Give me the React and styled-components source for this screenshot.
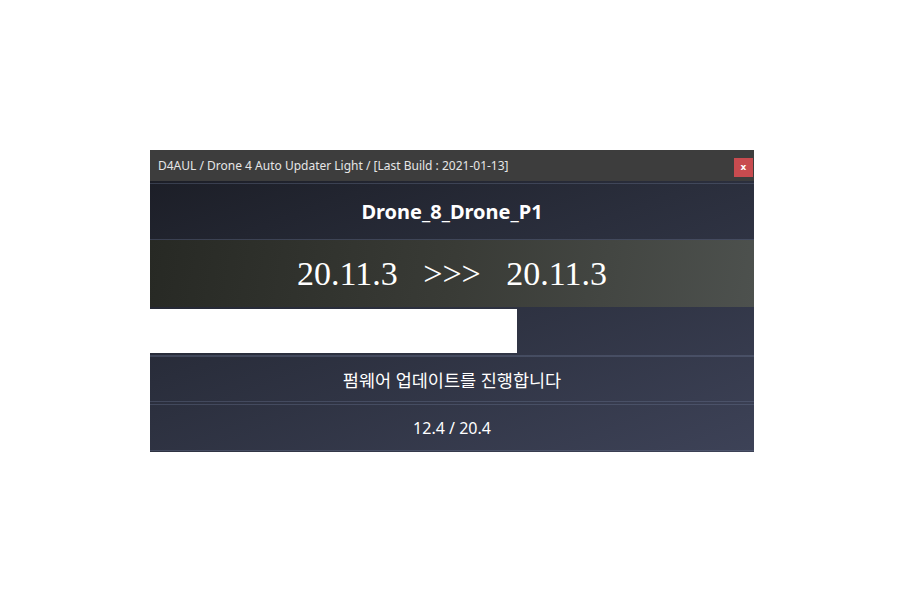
import React from "react"
import styled, { createGlobalStyle } from "styled-components"

const GlobalStyle = createGlobalStyle`
  html, body {
    margin: 0;
    padding: 0;
    background: #ffffff;
  }
  body {
    font-family: "Noto Sans", "Noto Sans CJK KR", sans-serif;
  }
`

const Page = styled.div`
  width: 904px;
  height: 602px;
  display: flex;
  align-items: center;
  justify-content: center;
`

const Window = styled.div`
  width: 604px;
  height: 302px;
  display: flex;
  flex-direction: column;
  background: linear-gradient(160deg, #1a1c24 0%, #2a2e3c 45%, #3d4257 100%);
  color: #ffffff;
`

const TitleBar = styled.div`
  height: 31px;
  flex: none;
  display: flex;
  align-items: center;
  justify-content: space-between;
  padding: 0 1px 0 8px;
  background: #3d3d3d;
`

const TitleText = styled.span`
  font-size: 12px;
  color: #e6e6e6;
  font-family: "Noto Sans", "Noto Sans CJK KR", sans-serif;
`

const CloseButton = styled.button`
  width: 19px;
  height: 19px;
  margin-top: 3px;
  border: none;
  padding: 0;
  background: #c84b4f;
  color: #ffffff;
  font-size: 9px;
  font-weight: bold;
  font-family: "DejaVu Sans", sans-serif;
  line-height: 19px;
`

const Section = styled.div`
  height: ${props => props.h}px;
  flex: none;
  margin-top: ${props => props.gap || 0}px;
  display: flex;
  align-items: center;
  justify-content: center;
  border-top: 1px solid rgba(110, 120, 150, 0.35);
  border-bottom: 1px solid rgba(110, 120, 150, 0.35);
  box-sizing: border-box;
  font-size: ${props => props.size || 16}px;
  font-weight: ${props => props.bold ? "bold" : "normal"};
`

const VersionBand = styled.div`
  height: 67px;
  flex: none;
  display: flex;
  align-items: center;
  justify-content: center;
  background: linear-gradient(100deg, #272924 0%, #393b36 50%, #4d514e 100%);
  font-family: "Liberation Serif", serif;
  font-size: 34px;
  white-space: pre;
`

const ProgressTrack = styled.div`
  height: 47px;
  flex: none;
  margin-top: 2px;
  display: flex;
  align-items: stretch;
  border-bottom: 1px solid rgba(110, 120, 150, 0.35);
  box-sizing: border-box;
`

const ProgressFill = styled.div`
  background: #ffffff;
  height: 44px;
`

export default function App() {
  const current = 12.4
  const total = 20.4
  const pct = (current / total) * 100

  return (
    <Page>
      <GlobalStyle />
      <Window>
        <TitleBar>
          <TitleText>D4AUL / Drone 4 Auto Updater Light / [Last Build : 2021-01-13]</TitleText>
          <CloseButton>x</CloseButton>
        </TitleBar>
        <Section h={57} gap={2} size={20} bold>Drone_8_Drone_P1</Section>
        <VersionBand>{"20.11.3   >>>   20.11.3"}</VersionBand>
        <ProgressTrack>
          <ProgressFill style={{ width: pct + "%" }} />
        </ProgressTrack>
        <Section h={46} gap={0} size={17.5}>펌웨어 업데이트를 진행합니다</Section>
        <Section h={47} gap={2}>{current} / {total}</Section>
      </Window>
    </Page>
  )
}
